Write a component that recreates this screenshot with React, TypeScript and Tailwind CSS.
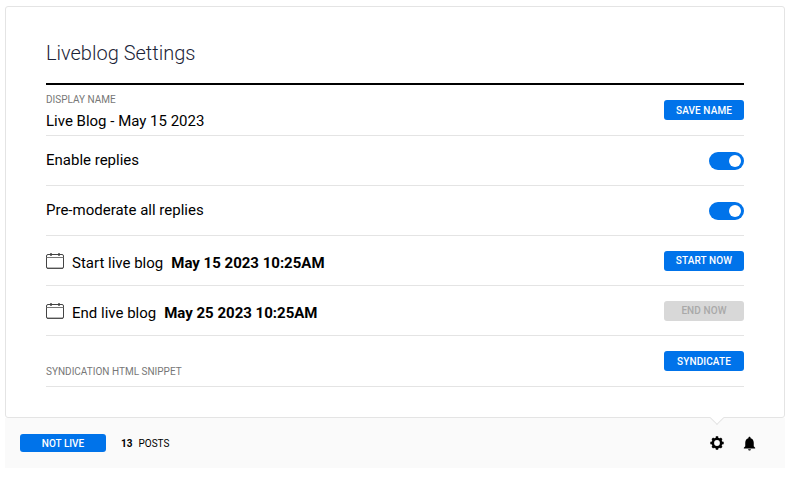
import React from "react";
import { MdNotifications } from "react-icons/md";

function Cal() {
  return (
    <svg width="18" height="18" viewBox="0 0 18 18" fill="none" className="shrink-0 -mt-[4px]">
      <path d="M0.5 6V4A1.5 1.5 0 0 1 2 2.5H16A1.5 1.5 0 0 1 17.5 4V15A1.5 1.5 0 0 1 16 16.5H2A1.5 1.5 0 0 1 0.5 15Z" stroke="#444" strokeWidth="1" />
      <path d="M0.5 5.5H17.5" stroke="#777" strokeWidth="1" />
      <path d="M5 1v3M13 1v3" stroke="#444" strokeWidth="1.4" />
      <path d="M1 16.2H17" stroke="#555" strokeWidth="1.2" />
    </svg>
  );
}

function Gear() {
  return (
    <svg width="14" height="14" viewBox="0 0 14 14" fill="none" className="shrink-0">
      <circle cx="7" cy="7" r="4.2" stroke="#000" strokeWidth="2.6" />
      <path
        d="M7 0.3V2M7 12V13.7M0.3 7H2M12 7H13.7M2.3 2.3L3.5 3.5M10.5 10.5L11.7 11.7M11.7 2.3L10.5 3.5M3.5 10.5L2.3 11.7"
        stroke="#000"
        strokeWidth="2.4"
      />
    </svg>
  );
}

function Btn({ children, disabled }: { children: React.ReactNode; disabled?: boolean }) {
  return (
    <button
      className={
        disabled
          ? "block w-[80px] h-[20px] pt-[1px] rounded-[3px] bg-[#d8d8d8] text-[#a9a9a9] text-[10px] font-medium tracking-[0.1px] leading-none"
          : "block w-[80px] h-[20px] pt-[1px] rounded-[3px] bg-[#0073ea] text-white text-[10px] font-medium tracking-[0.1px] leading-none"
      }
    >
      {children}
    </button>
  );
}

function Toggle() {
  return (
    <div className="w-[35px] h-[18px] rounded-full bg-[#0073ea] flex items-center justify-end pr-[3px]">
      <div className="w-[12px] h-[12px] rounded-full bg-white" />
    </div>
  );
}

export default function App() {
  return (
    <div className="w-[793px] h-[477px] bg-white pt-[6px] pl-[5px] font-['Roboto',sans-serif] text-black">
      <div className="w-[780px]">
        <div className="h-[412px] bg-white border border-[#e4e4e4] rounded-[3px] px-[40px] relative">
          <h1 className="h-[76px] pt-[32px] text-[20px] leading-[28px] font-light text-[#1c2438]">Liveblog Settings</h1>
          <div className="h-[2px] bg-black" />
          <div className="h-[51px] border-b border-[#e4e4e4] flex items-start justify-between">
            <div>
              <div className="mt-[9px] text-[10px] leading-[12px] text-[#777]">DISPLAY NAME</div>
              <div className="mt-[5px] text-[15px] leading-[20px]">Live Blog - May 15 2023</div>
            </div>
            <div className="mt-[15px]">
              <Btn>SAVE NAME</Btn>
            </div>
          </div>
          <div className="h-[50px] border-b border-[#e4e4e4] flex items-center justify-between">
            <span className="text-[15px]">Enable replies</span>
            <Toggle />
          </div>
          <div className="h-[50px] border-b border-[#e4e4e4] flex items-center justify-between">
            <span className="text-[15px]">Pre-moderate all replies</span>
            <Toggle />
          </div>
          <div className="h-[50px] border-b border-[#e4e4e4] flex items-center justify-between">
            <div className="flex items-center text-[15px] mt-[5px]">
              <Cal />
              <span className="ml-[8px]">Start live blog</span>
              <span className="ml-[8px] font-bold">May 15 2023 10:25AM</span>
            </div>
            <Btn>START NOW</Btn>
          </div>
          <div className="h-[50px] border-b border-[#e4e4e4] flex items-center justify-between">
            <div className="flex items-center text-[15px] mt-[5px]">
              <Cal />
              <span className="ml-[8px]">End live blog</span>
              <span className="ml-[8px] font-bold">May 25 2023 10:25AM</span>
            </div>
            <Btn disabled>END NOW</Btn>
          </div>
          <div className="h-[51px] border-b border-[#e4e4e4] flex items-start justify-between">
            <div className="mt-[30px] text-[10px] leading-[12px] text-[#777]">SYNDICATION HTML SNIPPET</div>
            <div className="mt-[15px]">
              <Btn>SYNDICATE</Btn>
            </div>
          </div>
          <div className="absolute right-[62px] -bottom-[6px] w-[10px] h-[10px] rotate-45 bg-white border-r border-b border-[#e4e4e4]" />
        </div>
        <div className="h-[50px] bg-[#fafafa] flex items-center justify-between pl-[15px] pr-[27px]">
          <div className="flex items-center">
            <div className="w-[86px] h-[18px] rounded-[3px] bg-[#0073ea] text-white text-[10px] font-medium flex items-center justify-center">NOT LIVE</div>
            <span className="ml-[15px] text-[10px] font-bold">13</span>
            <span className="ml-[6px] text-[10px]">POSTS</span>
          </div>
          <div className="flex items-center gap-[17px]">
            <Gear />
            <MdNotifications size={17} />
          </div>
        </div>
      </div>
    </div>
  );
}
